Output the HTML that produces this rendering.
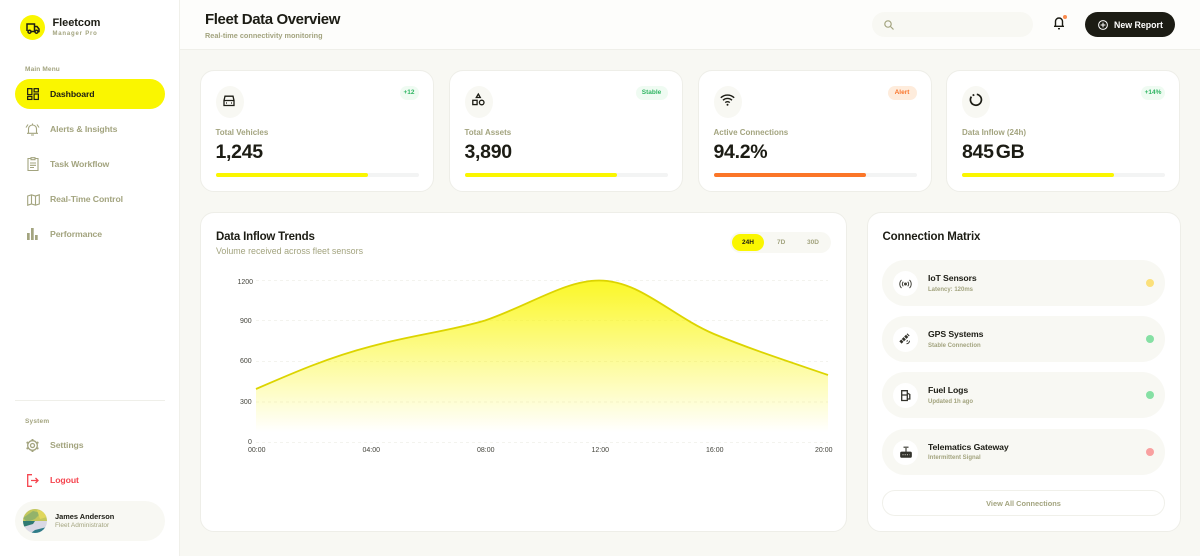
<!DOCTYPE html>
<html><head><meta charset="utf-8"><style>
*{box-sizing:border-box;margin:0;padding:0}
html,body{width:1200px;height:556px;overflow:hidden;background:#f8f8f3;font-family:"Liberation Sans",sans-serif;color:#1c1c14}
.a{position:absolute;white-space:nowrap}
.b{font-weight:700}
.side{position:absolute;left:0;top:0;width:180px;height:556px;background:#fff;border-right:1px solid #f0f0ea}
.nav{font-size:8.7px;letter-spacing:-.1px;font-weight:700;color:#a3a47f;left:50px}
svg{position:absolute;overflow:visible}
.card{position:absolute;top:70px;width:234px;height:122px;background:#fff;border:1px solid #eeeee8;border-radius:14px}
.ic{position:absolute;left:15px;top:15px;width:28px;height:32px;border-radius:50%;background:#f8f8f3}
.badge{position:absolute;top:15px;height:14px;border-radius:7px;font-size:6.5px;font-weight:700;line-height:14px;text-align:center;background:#effbf2;color:#2fb562}
.lab{position:absolute;left:15px;top:56.500px;font-size:8px;font-weight:700;color:#a3a47f;white-space:nowrap}
.val{position:absolute;left:15px;top:69.500px;font-size:19.500px;letter-spacing:-.3px;font-weight:700;color:#1c1c14;white-space:nowrap}
.tr{position:absolute;left:15px;top:102px;width:203px;height:4px;border-radius:2px;background:#f3f4f4}
.fl{height:4px;width:152px;border-radius:2px;background:#faf600}
.row{position:absolute;left:882px;width:283px;height:46px;border-radius:23px;background:#f8f8f3}
.dot{position:absolute;left:264px;top:19px;width:8px;height:8px;border-radius:50%}
.circ{position:absolute;left:11px;top:11px;width:25px;height:25px;border-radius:50%;background:#fff}
.t1{position:absolute;left:46px;top:13px;font-size:8.700px;letter-spacing:-.1px;font-weight:700;white-space:nowrap}
.t2{position:absolute;left:46px;top:26.500px;font-size:6px;font-weight:700;color:#a3a47f;white-space:nowrap}
.ax{position:absolute;font-size:7px;color:#44443c;white-space:nowrap}
</style></head><body>
<div class="side"></div>
<div class="a" style="left:20px;top:15px;width:25px;height:25px;border-radius:50%;background:#faf600"></div>
<svg style="left:26px;top:22.500px" width="14" height="11" viewBox="0 0 14 11" fill="none" stroke="#1c1c14" stroke-width="1.500"><path d="M1 8V1h7.500v7M8.500 3.500h2.500l2 2.500v2.500h-1M5 8.500h3.500"/><circle cx="3.500" cy="8.700" r="1.500"/><circle cx="10.500" cy="8.700" r="1.500"/></svg>
<div class="a b" style="left:52.500px;top:16.500px;font-size:11px;letter-spacing:-.05px">Fleetcom</div>
<div class="a b" style="left:52.500px;top:31px;font-size:6px;color:#a3a47f;letter-spacing:.8px">Manager Pro</div>
<div class="a b" style="left:25px;top:66px;font-size:6.500px;color:#a3a47f;letter-spacing:.15px">Main Menu</div>
<div class="a" style="left:15px;top:79px;width:150px;height:30px;border-radius:15px;background:#faf600"></div>
<svg style="left:26.500px;top:88px" width="12" height="12" viewBox="0 0 13 13" fill="none" stroke="#1c1c14" stroke-width="1.300"><rect x=".7" y=".7" width="4.600" height="6.500"/><rect x="7.700" y=".7" width="4.600" height="3.500"/><rect x=".7" y="9.200" width="4.600" height="3.200"/><rect x="7.700" y="6.500" width="4.600" height="5.900"/></svg>
<div class="a nav" style="top:89px;color:#1c1c14">Dashboard</div>
<svg style="left:25px;top:122px" width="15" height="14" viewBox="0 0 15 14" fill="none" stroke="#a3a47f" stroke-width="1.100"><path d="M3.500 11V7a4 4 0 0 1 8 0v4M2 11.300h11M6 13h3M7.500 1.500V3M1 5.500 3 2.500M14 5.500 12 2.500"/></svg>
<div class="a nav" style="top:124px">Alerts &amp; Insights</div>
<svg style="left:27px;top:157px" width="12" height="14" viewBox="0 0 12 14" fill="none" stroke="#a3a47f" stroke-width="1.100"><path d="M4 1.500H1v12h10v-12H8M4 .7h4v2H4zM3 6h6M3 8.300h6M3 10.500h4"/></svg>
<div class="a nav" style="top:159px">Task Workflow</div>
<svg style="left:26.500px;top:193.500px" width="13" height="12" viewBox="0 0 13 12" fill="none" stroke="#a3a47f" stroke-width="1.100"><path d="M.7 2 4.500.8 8.500 2 12.300.8V10L8.500 11.200 4.500 10 .7 11.200zM4.500.8V10M8.500 2v9.200"/></svg>
<div class="a nav" style="top:194px">Real-Time Control</div>
<svg style="left:27px;top:228px" width="11" height="12" viewBox="0 0 11 12" fill="#a3a47f"><rect x="0" y="5" width="2.700" height="7"/><rect x="4" y="0" width="2.700" height="12"/><rect x="8" y="7" width="2.700" height="5"/></svg>
<div class="a nav" style="top:229px">Performance</div>
<div class="a" style="left:15px;top:400px;width:150px;height:1px;background:#efefe9"></div>
<div class="a b" style="left:25px;top:418px;font-size:6.500px;color:#a3a47f;letter-spacing:.2px">System</div>
<svg style="left:26px;top:439px" width="13" height="13" viewBox="0 0 13 13" fill="none" stroke="#a3a47f" stroke-width="1.300"><circle cx="6.500" cy="6.500" r="2"/><circle cx="6.500" cy="6.500" r="4.800"/><path stroke-width="1.900" d="M6.500 0v2M6.500 11v2M.6 3.200l1.700 1M10.700 8.800l1.700 1M.6 9.800l1.700-1M10.700 4.200l1.700-1"/></svg>
<div class="a nav" style="top:440px">Settings</div>
<svg style="left:27px;top:474px" width="12" height="13" viewBox="0 0 12 13" fill="none" stroke="#f5454f" stroke-width="1.300"><path d="M5 .7H.7v11.600H5M4 6.500h7M8.500 4l2.500 2.500L8.500 9"/></svg>
<div class="a nav" style="top:475px;color:#f5454f">Logout</div>
<div class="a" style="left:15px;top:501px;width:150px;height:40px;border-radius:20px;background:#f8f8f3"></div>
<svg style="left:23px;top:509px" width="24" height="24" viewBox="0 0 24 24"><defs><clipPath id="av"><circle cx="12" cy="12" r="12"/></clipPath></defs><g clip-path="url(#av)"><rect width="24" height="24" fill="#d9d8e4"/><rect width="24" height="12" fill="#c4c85c"/><path d="M0 9 10 2l8 2-6 6-8 3z" fill="#93b36a"/><path d="M14 1l10 2v5l-7 2z" fill="#e0d75c"/><path d="M0 12h12l-2 3-10 3z" fill="#2f7a72"/><path d="M12 21l12-3v6H8z" fill="#2f7c88"/><path d="M0 20l9 4H0z" fill="#d9d8e4"/></g></svg>
<div class="a b" style="left:55px;top:511.500px;font-size:7.400px">James Anderson</div>
<div class="a" style="left:55px;top:521.500px;font-size:6.500px;color:#a3a47f">Fleet Administrator</div>

<div class="a" style="left:180px;top:0;width:1020px;height:50px;background:#fdfdfb;border-bottom:1px solid #efefe9"></div>
<div class="a b" style="left:205px;top:10.500px;font-size:15px;letter-spacing:-.4px">Fleet Data Overview</div>
<div class="a b" style="left:205px;top:31px;font-size:7.300px;color:#a3a47f">Real-time connectivity monitoring</div>
<div class="a" style="left:872px;top:12px;width:161px;height:25px;border-radius:13px;background:#f8f8f3"></div>
<svg style="left:884px;top:20px" width="10" height="10" viewBox="0 0 10 10" fill="none" stroke="#a3a47f" stroke-width="1.200"><circle cx="4" cy="4" r="3.200"/><path d="M6.500 6.500 9.500 9.500"/></svg>
<svg style="left:1053px;top:16px" width="12" height="14" viewBox="0 0 12 14" fill="none" stroke="#1c1c14" stroke-width="1.400"><path d="M2.500 10V5.500a3.500 3.500 0 0 1 7 0V10M1 10.300h10M5 12.700h2"/></svg>
<div class="a" style="left:1063px;top:15px;width:4px;height:4px;border-radius:50%;background:#f98b4e"></div>
<div class="a" style="left:1085px;top:12px;width:90px;height:25px;border-radius:13px;background:#1c1c14"></div>
<svg style="left:1098px;top:20px" width="10" height="10" viewBox="0 0 10 10" fill="none" stroke="#fff" stroke-width="1"><circle cx="5" cy="5" r="4.400"/><path d="M5 2.600v4.800M2.600 5h4.800"/></svg>
<div class="a b" style="left:1114px;top:19.500px;font-size:8.800px;color:#fff">New Report</div>

<div class="card" style="left:199.500px"><div class="ic"></div><div class="badge" style="left:199px;width:19px">+12</div><div class="lab">Total Vehicles</div><div class="val">1,245</div><div class="tr"><div class="fl"></div></div></div>
<div class="card" style="left:448.500px"><div class="ic"></div><div class="badge" style="left:186px;width:32px">Stable</div><div class="lab">Total Assets</div><div class="val">3,890</div><div class="tr"><div class="fl"></div></div></div>
<div class="card" style="left:697.500px"><div class="ic"></div><div class="badge" style="left:189px;width:29px;background:#feecdc;color:#f9752c">Alert</div><div class="lab">Active Connections</div><div class="val">94.2%</div><div class="tr"><div class="fl" style="background:#fb7628"></div></div></div>
<div class="card" style="left:946px"><div class="ic"></div><div class="badge" style="left:194px;width:24px">+14%</div><div class="lab">Data Inflow (24h)</div><div class="val" style="word-spacing:-3px">845 GB</div><div class="tr"><div class="fl"></div></div></div>
<svg style="left:223px;top:94.500px" width="12" height="12" viewBox="0 0 12 12" fill="none" stroke="#1c1c14" stroke-width="1.300"><path d="M1 5.500 2 1.200h8l1 4.300v5H1zM1 5.500h10M3 8h1M8 8h1"/></svg>
<svg style="left:472px;top:93px" width="13" height="13" viewBox="0 0 13 13" fill="none" stroke="#1c1c14" stroke-width="1.300"><path d="M6.300 1 8.300 4.500H4.300z"/><rect x=".8" y="7.300" width="4.300" height="4.300"/><circle cx="9.700" cy="9.500" r="2.300"/></svg>
<svg style="left:720px;top:93.500px" width="15" height="12" viewBox="0 0 15 12" fill="none" stroke="#1c1c14" stroke-width="1.400"><path d="M.8 3.800a9.500 9.500 0 0 1 13.400 0M3 6.300a6.300 6.300 0 0 1 9 0M5.300 8.600a3 3 0 0 1 4.400 0"/><circle cx="7.500" cy="10.800" r="1" fill="#1c1c14" stroke="none"/></svg>
<svg style="left:969px;top:92.500px" width="14" height="14" viewBox="0 0 14 14" fill="none" stroke="#1c1c14" stroke-width="1.700"><path d="M7.800 1.300a5.500 5.500 0 1 1-5.400 2.300"/><path d="M3.600 2.500 5.300 1.700"/></svg>

<div class="a" style="left:199.500px;top:211.500px;width:647.500px;height:320px;background:#fff;border:1px solid #eeeee8;border-radius:14px"></div>
<div class="a b" style="left:216px;top:230.500px;font-size:11.500px;letter-spacing:-.2px">Data Inflow Trends</div>
<div class="a" style="left:216px;top:245.500px;font-size:8.900px;color:#a3a47f">Volume received across fleet sensors</div>
<div class="a" style="left:730px;top:232px;width:101px;height:21px;border-radius:11px;background:#f8f8f3"></div>
<div class="a" style="left:732px;top:234px;width:32px;height:17px;border-radius:9px;background:#faf600"></div>
<div class="a b" style="left:742px;top:239px;font-size:6.500px">24H</div>
<div class="a b" style="left:777px;top:239px;font-size:6.500px;color:#a3a47f">7D</div>
<div class="a b" style="left:807px;top:239px;font-size:6.500px;color:#a3a47f">30D</div>
<svg style="left:0;top:0" width="1200" height="556" viewBox="0 0 1200 556" fill="none">
<defs><linearGradient id="g" x1="0" y1="280" x2="0" y2="432" gradientUnits="userSpaceOnUse"><stop offset="0" stop-color="#faf600" stop-opacity=".85"/><stop offset="1" stop-color="#faf600" stop-opacity="0"/></linearGradient></defs>
<path d="M256 280.500H828M256 320.500H828M256 361.500H828M256 402H828M256 442.500H828" stroke="#f3f3ee" stroke-width="1" stroke-dasharray="3 3"/>
<path d="M256 389C295 372 330 357 370.500 346.500C410 335.500 450 331 485 320.500C530 305 565 280.500 599 280.500C640 280.500 670 315 714 334C750 349 790 362 828 375V442H256Z" fill="url(#g)"/>
<path d="M256 389C295 372 330 357 370.500 346.500C410 335.500 450 331 485 320.500C530 305 565 280.500 599 280.500C640 280.500 670 315 714 334C750 349 790 362 828 375" stroke="#dcd400" stroke-width="1.800"/>
</svg>
<div class="ax" style="left:237.500px;top:278.500px">1200</div><div class="ax" style="left:240px;top:317.500px">900</div><div class="ax" style="left:240px;top:358px">600</div><div class="ax" style="left:240px;top:398.500px">300</div><div class="ax" style="left:248px;top:439px">0</div>
<div class="ax" style="left:248px;top:446.500px">00:00</div><div class="ax" style="left:362.500px;top:446.500px">04:00</div><div class="ax" style="left:477px;top:446.500px">08:00</div><div class="ax" style="left:591.500px;top:446.500px">12:00</div><div class="ax" style="left:706px;top:446.500px">16:00</div><div class="ax" style="left:815px;top:446.500px">20:00</div>

<div class="a" style="left:866.500px;top:211.500px;width:314px;height:320px;background:#fff;border:1px solid #eeeee8;border-radius:14px"></div>
<div class="a b" style="left:882.500px;top:230.500px;font-size:11.500px;letter-spacing:-.15px">Connection Matrix</div>
<div class="row" style="top:260px"><div class="circ"></div><div class="t1">IoT Sensors</div><div class="t2">Latency: 120ms</div><div class="dot" style="background:#fbe07a"></div></div>
<div class="row" style="top:316px"><div class="circ"></div><div class="t1">GPS Systems</div><div class="t2">Stable Connection</div><div class="dot" style="background:#86e0a4"></div></div>
<div class="row" style="top:372px"><div class="circ"></div><div class="t1">Fuel Logs</div><div class="t2">Updated 1h ago</div><div class="dot" style="background:#86e0a4"></div></div>
<div class="row" style="top:428.500px"><div class="circ"></div><div class="t1">Telematics Gateway</div><div class="t2">Intermittent Signal</div><div class="dot" style="background:#f9a0a0"></div></div>
<svg style="left:899px;top:279px" width="13" height="10" viewBox="0 0 13 10" fill="none" stroke="#44443c" stroke-width="1"><circle cx="6.500" cy="5" r="1" fill="#44443c"/><path d="M4.300 2.800a3 3 0 0 0 0 4.400M8.700 2.800a3 3 0 0 1 0 4.400M2.500 1a5.500 5.500 0 0 0 0 8M10.500 1a5.500 5.500 0 0 1 0 8"/></svg>
<svg style="left:899px;top:333px" width="13" height="13" viewBox="0 0 13 13" fill="none" stroke="#33332c"><path stroke-width="3.200" stroke-dasharray="2.600 .8" d="M1.500 9.500 9.500 1.500"/><path stroke-width="1" d="M7.500 10.800a3 3 0 0 0 3-3M7.500 8.300a1 1 0 0 0 1-1"/></svg>
<svg style="left:901px;top:390px" width="10" height="11" viewBox="0 0 10 11" fill="none" stroke="#33332c" stroke-width="1.300"><path d="M.7 10.500V.7h5.600v9.800zM.7 5h5.600M6.300 3l2.500 1.500v4.500H6.300"/></svg>
<svg style="left:900px;top:446px" width="12" height="12" viewBox="0 0 12 12" fill="none" stroke="#33332c" stroke-width="1.100"><rect x=".7" y="6.200" width="10.600" height="5" rx="1" fill="#33332c"/><path d="M6 6V2M3.500 1.200h5"/><path d="M2.500 8.700h7" stroke="#ccccc4" stroke-dasharray="1 1.200"/></svg>
<div class="a" style="left:882px;top:489.500px;width:283px;height:26px;border:1px solid #f0f0ea;border-radius:13px;background:#fff;text-align:center;font-size:7.400px;font-weight:700;line-height:25px;color:#a3a47f">View All Connections</div>
</body></html>
